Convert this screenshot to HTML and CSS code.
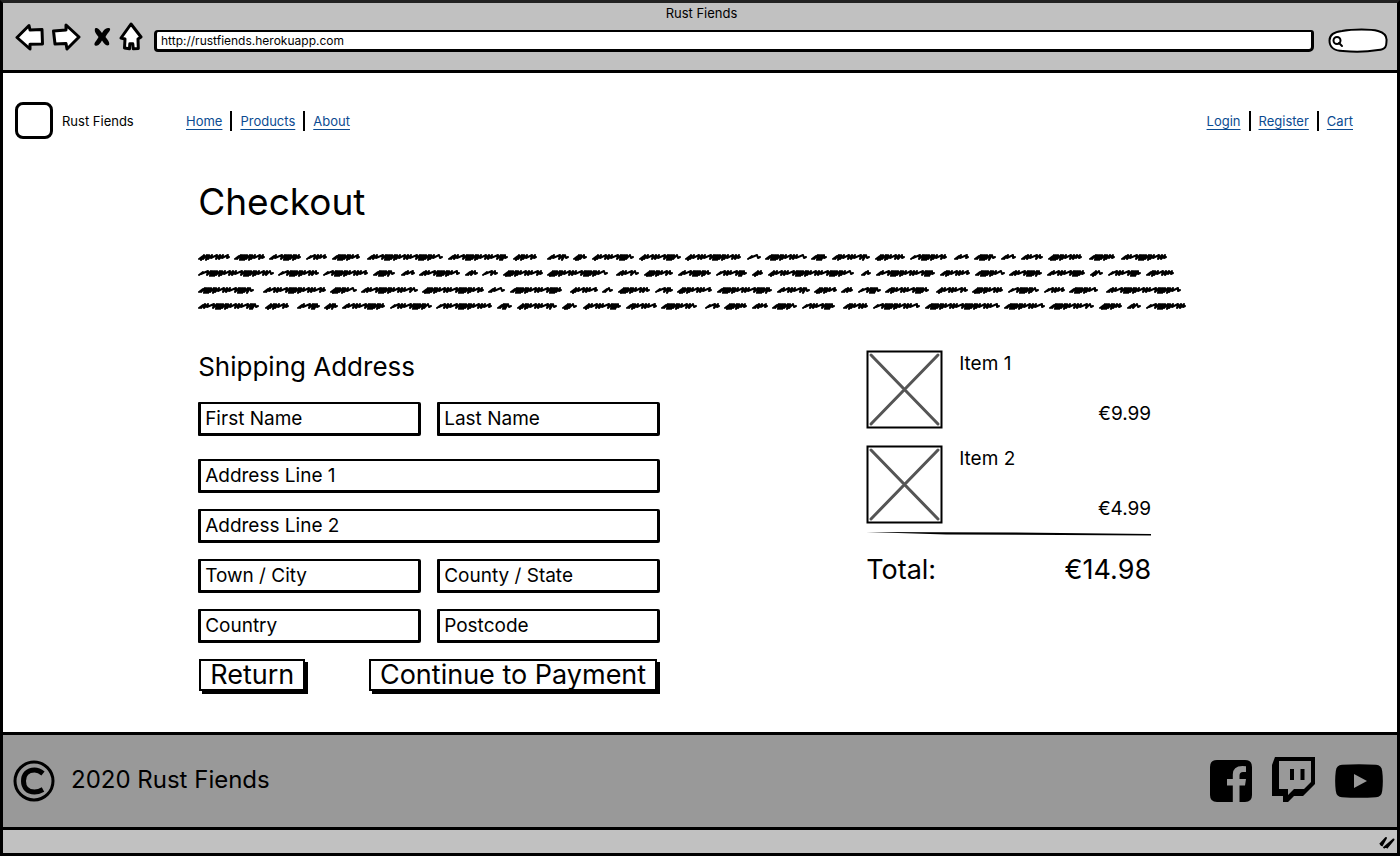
FILE: index.html
```html
<!DOCTYPE html>
<html lang="en">
<head>
<meta charset="utf-8">
<meta name="viewport" content="width=device-width, initial-scale=1">
<title>Rust Fiends</title>
<link rel="stylesheet" href="styles.css">
</head>
<body>
<div class="window">
  <header class="chrome">
    <div class="chrome-title">Rust Fiends</div>
    <div class="toolbar">
      <div class="tools">
        <button class="tool" aria-label="Back"><svg width="29" height="28" viewBox="0 0 29 28"><path d="M2 14.500 14 2.500l1 4.500 12-.5.5 14.500-12.500.3V26z"/></svg></button>
        <button class="tool" aria-label="Forward"><svg width="29" height="28" viewBox="0 0 29 28"><path d="M1.500 8 14 7V2l13 12-12 12-1-5.500-11 .5z"/></svg></button>
        <button class="tool tool-stop" aria-label="Stop"><svg width="18" height="20" viewBox="0 0 18 20"><path class="solid" d="M2 1.500c3-1.500 4 1 7 4.500C11 3 13 0 17 1.500c1 2-3 5-4.500 8.500 2 3 4.500 5 3.500 8-3 1.500-4.500-1-7-4.500-2 3-3.500 6-7 5-2-2 2-5 3.500-8.500C3.500 7 1 5 2 1.500z"/></svg></button>
        <button class="tool" aria-label="Home"><svg width="24" height="29" viewBox="0 0 24 29"><path d="M12 2 22 15l-3 2 .3 9.500-5 .3-.5-5h-3l-.3 5-5-.8L6 17l-4-1z"/></svg></button>
      </div>
      <input class="url" type="text" aria-label="Address" value="http://rustfiends.herokuapp.com">
      <label class="search">
        <svg width="60" height="26" viewBox="0 0 60 26"><path class="pill" d="M14 3C25 1 43 1 50 3c7 2 9 6 8.500 10-.2 4 .5 8-8.500 9-12 2-24 2-35 1C5 23 1.500 18 1.500 12.500 1.500 8 5 4 14 3z"/><circle class="lens" cx="9" cy="12.500" r="3.500"/><path class="lens" d="m11 15 3 3"/></svg>
        <input class="search-input" type="search" aria-label="Search">
      </label>
    </div>
  </header>

  <nav class="site-nav">
    <span class="logo"></span>
    <span class="brand">Rust Fiends</span>
    <div class="links">
      <a href="#">Home</a><a href="#">Products</a><a href="#">About</a>
    </div>
    <div class="links links-end">
      <a href="#">Login</a><a href="#">Register</a><a href="#">Cart</a>
    </div>
  </nav>

  <main class="page">
    <h1>Checkout</h1>
    <svg class="scribble" width="990" height="64" viewBox="0 0 990 64" aria-hidden="true"></svg>
    <div class="columns">
      <form class="shipping">
        <h2>Shipping Address</h2>
        <div class="name-row">
          <input class="field" type="text" aria-label="First Name" placeholder="First Name">
          <input class="field" type="text" aria-label="Last Name" placeholder="Last Name">
        </div>
        <div class="address">
          <input class="field wide" type="text" aria-label="Address Line 1" placeholder="Address Line 1">
          <input class="field wide" type="text" aria-label="Address Line 2" placeholder="Address Line 2">
          <input class="field" type="text" aria-label="Town / City" placeholder="Town / City">
          <input class="field" type="text" aria-label="County / State" placeholder="County / State">
          <input class="field" type="text" aria-label="Country" placeholder="Country">
          <input class="field" type="text" aria-label="Postcode" placeholder="Postcode">
        </div>
        <div class="actions">
          <button class="btn" type="button">Return</button>
          <button class="btn" type="submit">Continue to Payment</button>
        </div>
      </form>
      <section class="summary">
        <article class="item">
          <svg class="thumb" width="77" height="79" viewBox="0 0 77 79"><rect x="1.500" y="1.500" width="74" height="76"/><path d="m5 5 67 69M72 5 5 74"/></svg>
          <h3>Item 1</h3>
          <span class="price">€9.99</span>
        </article>
        <article class="item">
          <svg class="thumb" width="77" height="79" viewBox="0 0 77 79"><rect x="1.500" y="1.500" width="74" height="76"/><path d="m5 5 67 69M72 5 5 74"/></svg>
          <h3>Item 2</h3>
          <span class="price">€4.99</span>
        </article>
        <svg class="rule" height="4" viewBox="0 0 285 4" preserveAspectRatio="none"><path d="M0 0 150 .5 285 2v1.500L80 2.500z"/></svg>
        <div class="total"><span>Total:</span><span>€14.98</span></div>
      </section>
    </div>
  </main>

  <footer class="footer">
    <svg class="copyright" width="42" height="42" viewBox="0 0 42 42" role="img" aria-label="Copyright"><circle cx="21" cy="21" r="19"/><path d="M30 13.500C27 11 24.500 10 21.500 10 14.500 10 10.500 14.500 10.500 21s4 11 11 11c3 0 5.500-.8 8.500-2.500" class="c"/></svg>
    <span class="copy-text">2020 Rust Fiends</span>
    <div class="social">
      <a href="#" aria-label="Facebook"><svg width="42" height="42" viewBox="0 0 42 42"><path fill-rule="evenodd" d="M7 0h28q7 0 7 7v28q0 7-7 7h-5.500V25.500H35l1-6.500h-6.500v-3.500q0-3.500 3.500-3.500h3V6.200Q22.800 4.500 22.800 14.500V19H17v6.500h5.800V42H7q-7 0-7-7V7q0-7 7-7z"/></svg></a>
      <a href="#" aria-label="Twitch"><svg width="43" height="48" viewBox="0 0 43 48"><path fill-rule="evenodd" d="M3 0h40v27L31 39h-9l-6 6h-5v-6H0V8zM7 4v28h9v6l6-6h10l7-7V4zM18 12h4v11h-4zM28.500 12h4v11h-4z"/></svg></a>
      <a href="#" aria-label="YouTube"><svg width="48" height="34" viewBox="0 0 48 34"><path fill-rule="evenodd" d="M7 .8Q24-.5 41 .8 46.500 1 47.200 7 48.500 17 47.200 27 46.500 33 41 33.200 24 34.500 7 33.200 1.500 33 .8 27-.5 17 .8 7 1.500 1 7 .8zM19 10v14l13-7z"/></svg></a>
    </div>
  </footer>
  <div class="status">
    <svg width="18" height="14" viewBox="0 0 18 14"><path d="M2 8.500 8 2 3.500 10M5.500 12 15.500 3.500 8.500 12"/></svg>
  </div>
</div>
<script src="scribble.js"></script>
</body>
</html>
```
FILE: scribble.js
```js
// Start and end of each scribbled word, line by line.
const lines = [
  "0-32 36-67 71-103 108-129 134-162 169-245 250-310 315-339 349-371 375-389 394-436 441-483 487-543 549-563 567-609 613-629 634-672 677-707 712-749 756-771 776-798 803-818 823-845 850-884 891-917 923-969",
  "0-76 80-121 125-170 175-197 203-217 221-262 267-280 284-300 305-345 349-410 418-441 446-475 480-513 518-549 554-565 570-656 663-673 678-737 742-772 777-807 811-844 849-887 892-905 910-943 948-976",
  "0-56 65-128 132-159 163-220 224-286 290-307 312-364 372-400 404-415 420-452 457-475 479-514 519-574 579-612 616-639 643-655 660-683 687-731 738-770 774-805 810-841 846-867 871-900 908-983",
  "0-61 67-91 99-122 126-140 144-187 192-234 238-294 299-314 319-359 364-379 385-423 428-459 463-499 507-522 526-549 554-570 574-599 604-637 645-670 675-722 727-802 806-847 851-896 901-924 929-943 948-988"
];
const centers = [8, 24, 41, 57];
// Horizontal step and depth of successive strokes: tight runs, then long flat ones.
const strokes = [[2, 3], [3, 2], [2, 3], [3, 2], [5, 1], [3, 2], [3, 2], [6, 1], [3, 2], [2, 3], [2, 3]];
let path = "";
let n = 0;
lines.forEach((line, row) => {
  const y = centers[row];
  line.split(" ").forEach(word => {
    const [a, b] = word.split("-").map(Number);
    path += `M${a + 1} ${y + 2}L${a + 5} ${y - 1}`;
    let x = a + 3;
    while (x < b - 5) {
      const [step, depth] = strokes[n++ % strokes.length];
      path += `L${x} ${y + depth}L${Math.min(x + step + 1, b - 2)} ${y - 2}`;
      x += step;
    }
    path += `L${b - 3} ${y + 1}L${b - 1} ${y}`;
  });
});
const stroke = document.createElementNS("http://www.w3.org/2000/svg", "path");
stroke.setAttribute("d", path);
document.querySelector(".scribble").append(stroke);
```
FILE: styles.css
```css
* { box-sizing: border-box; }

body {
  margin: 0;
  background: #fff;
  color: #000;
  font-family: Inter, "Liberation Sans", sans-serif;
  font-size: 13px;
  line-height: 16px;
}

svg { display: block; flex: none; }
input, button { font: inherit; color: inherit; }

.window {
  display: flex;
  flex-direction: column;
  min-height: calc(100vh - 1px);
  border: 3px solid #000;
  border-top-color: #222;
}

.chrome {
  background: #c1c1c1;
  border-bottom: 3px solid #000;
  padding: 2px 9px 18px 12px;
}
.chrome-title { text-align: center; }
.toolbar { display: flex; align-items: center; gap: 11px; height: 31px; }
.tools { display: flex; align-items: center; gap: 8px; }
.tool { padding: 0; border: 0; background: none; }
.tool path { fill: #fff; stroke: #000; stroke-width: 3; stroke-linejoin: round; }
.tool-stop { margin-left: 4px; }
.tool .solid { fill: #000; stroke: none; }
.url {
  flex: 1;
  min-width: 0;
  height: 22px;
  margin-top: 8px;
  padding: 0 4px;
  background: #fff;
  border: 3px solid #000;
  border-top-width: 2px;
  border-radius: 4px 3px 5px 4px;
  font-size: 12px;
}
.search { display: grid; margin: 8px 0 0 3px; }
.search > * { grid-area: 1 / 1; }
.search-input { width: 38px; margin-left: 17px; border: 0; background: none; padding: 0; outline: 0; }
.pill { fill: #fff; stroke: #000; stroke-width: 2; }
.lens { fill: none; stroke: #000; stroke-width: 2; stroke-linecap: round; }

.site-nav { display: flex; align-items: center; padding: 29px 36px 0 12px; }
.logo { width: 38px; height: 37px; border: 3px solid #000; border-radius: 8px; }
.brand { width: 124px; margin-left: 9px; }
.links { display: flex; align-items: center; }
.links a {
  padding: 2px 8px;
  color: #0b4b91;
  font-size: 13px;
  text-decoration: underline;
  text-underline-offset: 3px;
  text-decoration-thickness: 1px;
}
.links a:first-child { padding-left: 0; }
.links a + a { border-left: 2px solid #000; }
.links-end { margin-left: auto; }

.page { flex: 1; padding: 39px 0 32px 14%; }
h1, h2, h3 { margin: 0; font-weight: 400; }
h1 { font-size: 37px; line-height: 48px; }
.scribble { max-width: 100%; margin: 23px 0 32px; }
.scribble path { fill: none; stroke: #000; stroke-width: 2; stroke-linejoin: round; stroke-linecap: round; }

.columns {
  display: grid;
  grid-template-columns: minmax(0, 462px) 285px;
  justify-content: space-between;
  max-width: 953px;
}
h2 { font-size: 26px; line-height: 32px; margin: 6px 0 19px; }
.name-row, .address { display: grid; grid-template-columns: 1fr 1fr; gap: 16px; }
.name-row { margin-bottom: 23px; }
.wide { grid-column: 1 / -1; }
.field {
  width: 100%;
  min-width: 0;
  height: 34px;
  padding: 0 4px;
  border: 3px solid #000;
  border-top-width: 2px;
  border-radius: 1px 2px 2px 1px;
  background: #fff;
  font-size: 19px;
}
.field::placeholder { color: #000; opacity: 1; }

.actions { display: flex; justify-content: space-between; margin-top: 16px; padding: 0 3px 3px 1px; }
.btn {
  height: 32px;
  padding: 0 9px;
  background: #fff;
  border: 2px solid #000;
  box-shadow: 3px 3px 0 #000;
  font-size: 27px;
  line-height: 28px;
}

.summary { padding-top: 5px; }
.item { display: grid; grid-template-columns: 77px 1fr; grid-template-rows: 48px 31px; column-gap: 16px; margin-bottom: 16px; }
.item + .item { margin-bottom: 8px; }
.thumb { grid-row: 1 / 3; fill: #fff; stroke: #000; stroke-width: 2; }
.thumb path { stroke: #555; stroke-width: 3; stroke-linecap: round; }
h3, .price { font-size: 19px; line-height: 28px; }
.price { line-height: 31px; text-align: right; }
.rule { width: 100%; }
.total { display: flex; justify-content: space-between; margin-top: 16px; font-size: 27px; line-height: 36px; }

.footer {
  display: flex;
  align-items: center;
  min-height: 98px;
  padding: 0 14px 0 10px;
  background: #999;
  border-top: 3px solid #000;
  border-bottom: 3px solid #000;
}
.copyright { fill: none; stroke: #000; stroke-width: 3; }
.copyright .c { stroke-width: 5; }
.copy-text { margin-left: 16px; padding-bottom: 2px; font-size: 24px; line-height: 28px; }
.social { display: flex; align-items: center; gap: 20px; margin-left: auto; }
.status { display: flex; justify-content: flex-end; align-items: center; height: 23px; padding: 3px 1px 0; background: #c1c1c1; }
.status path { fill: #000; stroke: #000; stroke-width: 2; stroke-linejoin: round; }
```
